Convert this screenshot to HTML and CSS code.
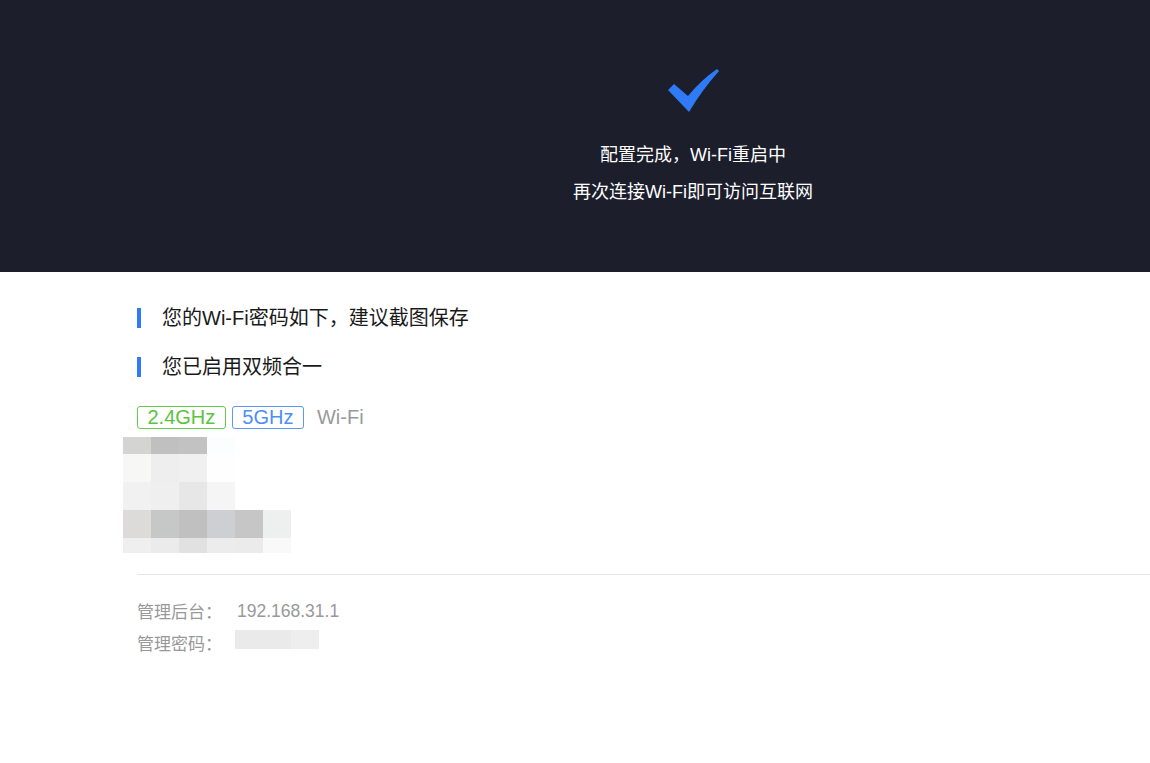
FILE: index.html
```html
<!DOCTYPE html>
<html lang="zh-CN">

<head>
  <meta charset="UTF-8">
  <meta name="viewport" content="width=device-width, initial-scale=1.0">
  <title>配置完成</title>
  <link rel="stylesheet" href="styles.css">
</head>

<body>

  <div class="banner">
    <svg class="done-icon" width="56" height="48" viewBox="0 0 56 48">
      <path d="M3 24 L9 18 L23 30 Q36 14 52 3 L54 5 Q37 24 24 46 Z" fill="#2f7bf5" />
    </svg>
    <div class="banner-text">
      <div>配置完成，Wi-Fi重启中</div>
      <div>再次连接Wi-Fi即可访问互联网</div>
    </div>
  </div>

  <div class="content">
    <div class="title"><span class="bar"></span>您的Wi-Fi密码如下，建议截图保存</div>
    <div class="title title-2"><span class="bar"></span>您已启用双频合一</div>

    <div class="tags">
      <span class="tag tag-green">2.4GHz</span>
      <span class="tag tag-blue">5GHz</span>
      <span class="tag-text">Wi-Fi</span>
    </div>

    <!-- wifi name / password, blurred -->
    <div class="mosaic" id="mosaic"></div>

    <div class="divider"></div>

    <div class="info-row">
      <span class="info-label">管理后台：</span>
      <span class="info-value">192.168.31.1</span>
    </div>
    <div class="info-row">
      <span class="info-label">管理密码：</span>
      <span class="pwd-mosaic"><span class="pm-a"></span><span class="pm-b"></span></span>
    </div>
  </div>

  <script>
    const cells = [
      ['#d4d4d2', '#c0c0c0', '#c2c2c2', '#fcfdff', '#fff', '#fff'],
      ['#f7f7f5', '#eeeeee', '#f0f0f0', '#fefefe', '#fff', '#fff'],
      ['#f1f1f1', '#efefef', '#e7e7e7', '#f5f5f5', '#fff', '#fff'],
      ['#dcdbd9', '#c6c8c7', '#c0c0c0', '#cdcfd2', '#c6c6c6', '#eef0ef'],
      ['#efefef', '#ebebeb', '#e1e1e1', '#ececec', '#ebebeb', '#f9f9f9']
    ];
    const mosaic = document.getElementById('mosaic');
    cells.forEach(row => {
      row.forEach(c => {
        const cell = document.createElement('span');
        cell.style.background = c;
        mosaic.appendChild(cell);
      });
    });
  </script>
</body>

</html>
```

FILE: styles.css
```css
body {
  margin: 0;
  font-family: 'Liberation Sans', 'Noto Sans CJK SC', sans-serif;
  background: #fff;
}

.banner {
  height: 272px;
  box-sizing: border-box;
  padding: 66px 0 0 236px;
  background-color: #1c1e2b;
  display: flex;
  flex-direction: column;
  align-items: center;
}

.done-icon {
  display: block;
}

.banner-text {
  margin-top: 23px;
  color: #fff;
  font-size: 18px;
  line-height: 37px;
  text-align: center;
}

.content {
  padding-left: 137px;
}

.title {
  display: flex;
  align-items: center;
  margin-top: 36px;
  height: 20px;
  font-size: 20px;
  line-height: 20px;
  color: #1a1a1a;
}

.title-2 {
  margin-top: 29px;
}

.bar {
  width: 4px;
  height: 20px;
  background-color: #2f7bf5;
  margin-right: 21px;
}

.tags {
  display: flex;
  align-items: center;
  margin-top: 29px;
  height: 23px;
}

.tag {
  font-size: 20px;
  line-height: 21px;
  padding: 0 9.5px;
  border: 1px solid;
  border-radius: 3px;
  margin-right: 6px;
}

.tag-green {
  color: #5ac43f;
  border-color: #66c94d;
}

.tag-blue {
  color: #4b8ff7;
  border-color: #5c97f5;
}

.tag-text {
  margin-left: 7px;
  font-size: 20px;
  color: #999;
}

.mosaic {
  margin: 8px 0 0 -14px;
  display: grid;
  grid-template-columns: repeat(6, 28px);
  grid-template-rows: 17px 28px 28px 28px 15px;
}

.divider {
  margin-top: 21px;
  height: 1px;
  background-color: #e6e6e6;
}

.info-row {
  display: flex;
  align-items: center;
  height: 32px;
  font-size: 17px;
  color: #999;
}

.divider + .info-row {
  margin-top: 19px;
}

.info-label {
  width: 100px;
}

.info-value {
  font-size: 17.5px;
  padding-top: 2px;
}

.pwd-mosaic {
  display: flex;
  margin: -6px 0 0 -2px;
  height: 19px;
}

.pm-a {
  width: 56px;
  background-color: #eaeaea;
}

.pm-b {
  width: 28px;
  background-color: #eeeeee;
}
```
